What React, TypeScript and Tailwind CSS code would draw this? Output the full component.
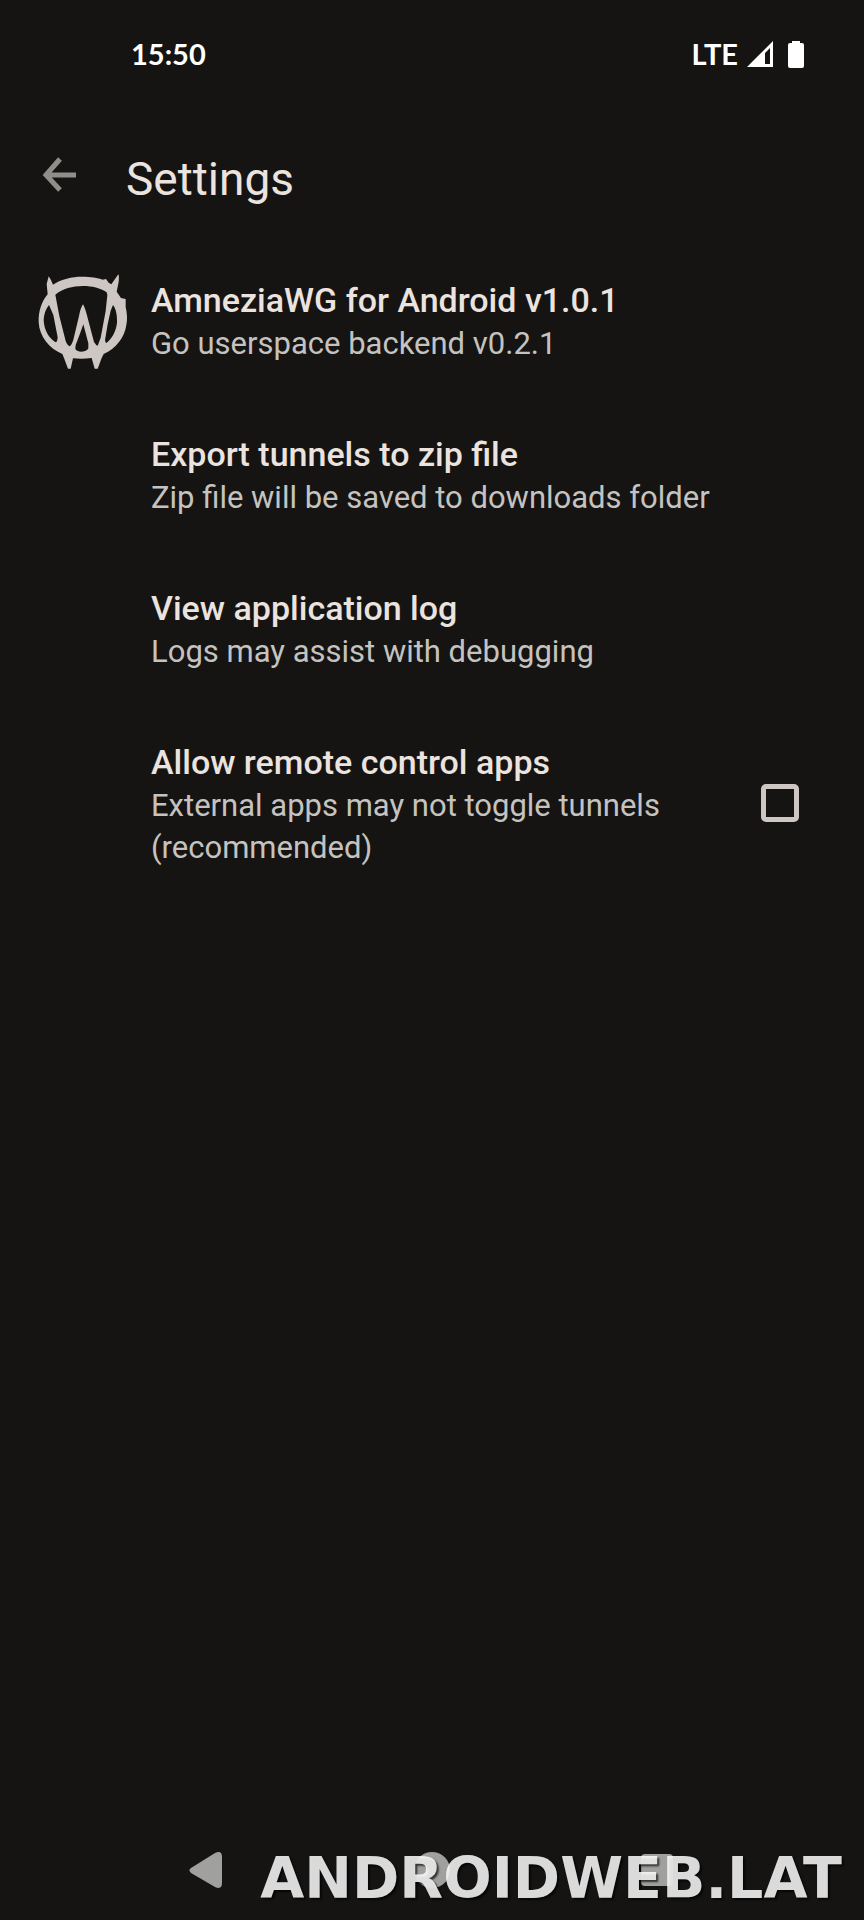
import React, { useState } from 'react'

interface SettingRowProps {
  title: string
  summary: string
  icon?: React.ReactNode
}

const AppLogo = () => (
  <svg width="90" height="96" viewBox="54 54 270 288" fill="#cdc6c2" aria-hidden="true">
    <path
      fillRule="evenodd"
      d="M86 61 Q92 69 99 86 C125 69 155 62 186 62 C212 62 234 65 248 71 L258 69 L266 80 L274 85 L295 55 Q298 60 296 78 L290 107 L303 126 L317 129 L317 153 C321 170 323 190 319 207 C314 244 288 278 251 294 L245 306 L233 338 L224 338 L215 306 Q186 310 159 307 L152 338 L144 338 L132 306 L127 294 C87 278 58 241 56 199 C55 165 65 137 83 115 L80 84 Z
      M106 116 C128 98 157 90 189 90 C217 90 241 96 260 109 L262 117 L257 165 L242 245 L233 269 Q228 268 222 258 L204 190 Q195 154 189 145 Q181 157 177 180 L160 251 Q155 268 148 271 Q140 266 137 255 L118 180 Z
      M87 147 C77 159 72 174 71 192 C72 221 86 246 107 259 Q112 259 113 244 L100 177 Z
      M279 147 L272 164 L263 205 L255 253 L258 262 C277 247 288 226 291 200 C292 178 288 158 279 147 Z
      M190 205 L181 230 L167 267 L166 278 Q169 286 185 287 Q202 286 205 277 L205 262 Z"
    />
  </svg>
)

const StatusBar = () => (
  <div className="flex h-27 items-center justify-between pr-[60px] pl-[131px] font-['Lato',sans-serif] text-[29px] leading-9 font-bold text-white">
    <span>15:50</span>
    <div className="flex items-center">
      <span>LTE</span>
      <svg className="ml-2" width="28" height="28" viewBox="0 0 28 28" aria-hidden="true">
        <path fillRule="evenodd" fill="#fff" d="M1 27 L27 1 V27 Z M19 13 L24 8 V24 H19 Z" />
      </svg>
      <svg className="ml-3.5" width="16" height="28" viewBox="0 0 16 28" aria-hidden="true">
        <path fill="#fff" d="M4 1 H12 V3 H14 Q16 3 16 5 V26 Q16 28 14 28 H2 Q0 28 0 26 V5 Q0 3 2 3 H4 Z" />
      </svg>
    </div>
  </div>
)

const RowText = ({ title, summary }: { title: string; summary: string }) => (
  <>
    <span className="block text-[34px] leading-[45px] font-medium text-[#ebe3df]">{title}</span>
    <span className="block text-[31px] leading-[42px] text-[#c5c3c0]">{summary}</span>
  </>
)

const SettingRow: React.FC<SettingRowProps> = ({ title, summary, icon }) => (
  <li>
    <button type="button" className="flex w-full items-center pt-[34px] pr-16 pb-[33px] pl-[38px] text-left">
      <span className="-my-2 w-[113px] flex-none">{icon}</span>
      <span className="min-w-0 flex-1">
        <RowText title={title} summary={summary} />
      </span>
    </button>
  </li>
)

const NavBar = () => (
  <nav aria-label="System navigation" className="relative flex h-[100px] justify-center gap-[187px] pt-8">
    <button type="button" aria-label="Back" className="size-[38px]">
      <svg width="36" height="38" viewBox="-1 0 36 38" fill="#a0a09e">
        <path d="M2 16 L26 1 Q33 -2 33 5 V31 Q33 38 26 35 L2 21 Q-1 18 2 16 Z" />
      </svg>
    </button>
    <button type="button" aria-label="Home" className="size-[38px]">
      <svg width="38" height="38" viewBox="0 0 38 38">
        <circle cx="19" cy="18" r="18" fill="#a0a09e" />
      </svg>
    </button>
    <button type="button" aria-label="Recent apps" className="size-[38px]">
      <svg width="38" height="38" viewBox="0 0 38 38">
        <rect x="3" y="2" width="32" height="32" rx="4" fill="#a0a09e" />
      </svg>
    </button>
    <span className="pointer-events-none absolute right-[22px] bottom-[9px] font-['DejaVu_Sans',sans-serif] text-[57px] leading-[66px] font-bold text-white/85 [text-shadow:2px_2px_2px_#000000b0]">
      ANDROIDWEB.LAT
    </span>
  </nav>
)

const App = () => {
  const [remoteControl, setRemoteControl] = useState(false)

  return (
    <div className="flex min-h-screen flex-col bg-[#151412] font-['Roboto',sans-serif]">
      <StatusBar />

      <header className="flex h-[136px] items-center pt-1.5 pl-[42px]">
        <button type="button" aria-label="Back" className="mb-2 flex-none">
          <svg width="36" height="36" viewBox="0 0 36 36" fill="none" stroke="#8f8e8b" strokeWidth="5">
            <path d="M18 2 L4 18 L18 33 M4 18 H34" />
          </svg>
        </button>
        <h1 className="ml-12 text-[46px] leading-14 text-[#ebe3df]">Settings</h1>
      </header>

      <main className="flex-1">
        <ul>
          <SettingRow title="AmneziaWG for Android v1.0.1" summary="Go userspace backend v0.2.1" icon={<AppLogo />} />
          <SettingRow title="Export tunnels to zip file" summary="Zip file will be saved to downloads folder" />
          <SettingRow title="View application log" summary="Logs may assist with debugging" />
          <li>
            <label className="flex items-center pt-[34px] pr-[65px] pb-[33px] pl-[151px]">
              <span className="min-w-0 flex-1 pr-16">
                <RowText title="Allow remote control apps" summary="External apps may not toggle tunnels (recommended)" />
              </span>
              <input
                type="checkbox"
                aria-label="Allow remote control apps"
                checked={remoteControl}
                onChange={(e) => setRemoteControl(e.target.checked)}
                className="mb-1 size-[38px] flex-none appearance-none rounded-[5px] border-[5px] border-[#cdc6c2] checked:bg-[#cdc6c2]"
              />
            </label>
          </li>
        </ul>
      </main>

      <NavBar />
    </div>
  )
}

export default App
